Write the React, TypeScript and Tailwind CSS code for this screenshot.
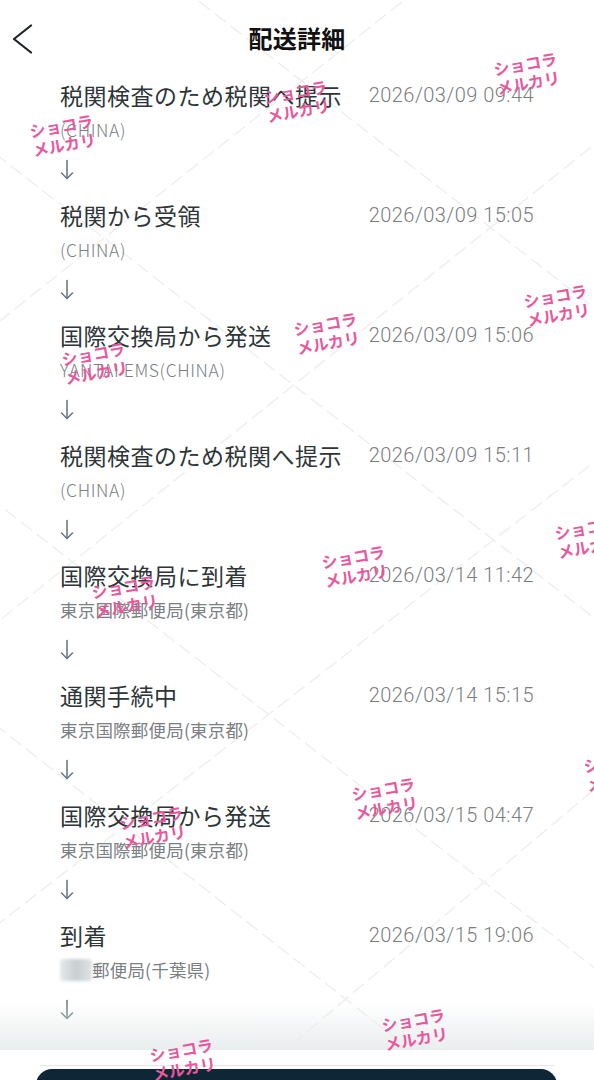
import React from "react";

type Entry = { title: string; date: string; sub: React.ReactNode };

const entries: Entry[] = [
  { title: "税関検査のため税関へ提示", date: "2026/03/09 09:44", sub: "(CHINA)" },
  { title: "税関から受領", date: "2026/03/09 15:05", sub: "(CHINA)" },
  { title: "国際交換局から発送", date: "2026/03/09 15:06", sub: "YANTAI EMS(CHINA)" },
  { title: "税関検査のため税関へ提示", date: "2026/03/09 15:11", sub: "(CHINA)" },
  { title: "国際交換局に到着", date: "2026/03/14 11:42", sub: "東京国際郵便局(東京都)" },
  { title: "通関手続中", date: "2026/03/14 15:15", sub: "東京国際郵便局(東京都)" },
  { title: "国際交換局から発送", date: "2026/03/15 04:47", sub: "東京国際郵便局(東京都)" },
  {
    title: "到着",
    date: "2026/03/15 19:06",
    sub: (
      <span className="flex items-center">
        <span className="inline-block w-[32px] h-[22px] rounded-[3px] bg-gradient-to-r from-[#e6e9ea] via-[#c9cfd1] to-[#dfe3e4] blur-[1.5px]" />
        <span>郵便局(千葉県)</span>
      </span>
    ),
  },
];

const marks: [number, number][] = [
  [492, 60],
  [262, 88],
  [28, 122],
  [522, 292],
  [292, 320],
  [60, 350],
  [553, 524],
  [320, 553],
  [90, 583],
  [582, 757],
  [350, 785],
  [118, 814],
  [380, 1016],
  [148, 1046],
];

function DownArrow() {
  return (
    <svg width="16" height="22" viewBox="0 0 16 22" fill="none" stroke="#6d7b80" strokeWidth="1.6" strokeLinecap="round" strokeLinejoin="round">
      <path d="M7 1.5 V19.5" />
      <path d="M1.5 14 L7 19.5 L12.5 14" />
    </svg>
  );
}

export default function App() {
  return (
    <div className="relative w-[594px] h-[1080px] overflow-hidden bg-white" style={{ fontFamily: '"Noto Sans CJK JP", Roboto, sans-serif' }}>
      {/* faint watermark lines */}
      <svg className="absolute inset-0 pointer-events-none" width="594" height="1080">
        <g stroke="#efefef" strokeWidth="1.5" strokeDasharray="14 6">
          <line x1="-100" y1="80" x2="700" y2="700" />
          <line x1="-200" y1="350" x2="700" y2="1050" />
          <line x1="120" y1="-60" x2="700" y2="390" />
          <line x1="-100" y1="650" x2="500" y2="1120" />
          <line x1="700" y1="60" x2="-100" y2="700" />
          <line x1="700" y1="380" x2="-100" y2="1000" />
          <line x1="480" y1="-60" x2="-100" y2="400" />
          <line x1="700" y1="700" x2="250" y2="1080" />
        </g>
      </svg>

      {/* header */}
      <div className="relative h-[77px] flex items-start">
        <div className="h-[77px] w-full relative flex justify-center pt-[22px]">
          <span className="text-[24px] font-bold text-[#111] leading-[32px] tracking-[0.3px]">配送詳細</span>
        </div>
        <svg className="absolute left-[12px] top-[24px]" width="22" height="30" viewBox="0 0 22 30" fill="none" stroke="#1d2326" strokeWidth="2.2" strokeLinecap="round" strokeLinejoin="round">
          <path d="M19 1.5 L2 15 L19 28.5" />
        </svg>
      </div>

      {/* list */}
      <div className="relative">
        {entries.map((e, i) => (
          <div key={i} className="h-[120px] pl-[60px] pr-[60px]">
            <div className="h-[36px] flex items-center justify-between">
              <span className="text-[23px] text-[#2e3538] leading-none tracking-[0.5px]">{e.title}</span>
              <span className="text-[20px] text-[#7a7e80] leading-none font-light tracking-[0.45px]" style={{ fontFamily: "Roboto, sans-serif" }}>{e.date}</span>
            </div>
            <div className="h-[34px] flex items-center text-[17.5px] text-[#7a8083] leading-none tracking-[0.2px]">
              {typeof e.sub === "string" ? (
                <span className={/[A-Z]/.test(e.sub) ? "font-light tracking-[0.6px]" : ""}>{e.sub}</span>
              ) : (
                e.sub
              )}
            </div>
            <div className="h-[46px] flex items-center">
              <DownArrow />
            </div>
          </div>
        ))}
      </div>

      {/* bottom bar */}
      <div className="absolute left-0 right-0 bottom-0">
        <div className="h-[48px] bg-gradient-to-b from-white/0 to-[#eaedee]" />
        <div className="h-[30px] bg-white relative">
          <div className="absolute left-[40px] right-[40px] top-[15px] h-px bg-[#e4e7e8]" />
          <div className="absolute left-[36px] right-[37px] top-[19px] h-[40px] rounded-[16px] bg-[#0f2636]" />
        </div>
      </div>

      {/* watermarks */}
      {marks.map(([x, y], i) => (
        <div
          key={i}
          className="absolute whitespace-nowrap text-[16px] leading-[19px] font-bold text-[#e8589c] -rotate-[10deg] origin-top-left pointer-events-none"
          style={{ left: x, top: y, fontFamily: '"Noto Sans CJK JP", sans-serif' }}
        >
          <div>ショコラ</div>
          <div>メルカリ</div>
        </div>
      ))}
    </div>
  );
}
